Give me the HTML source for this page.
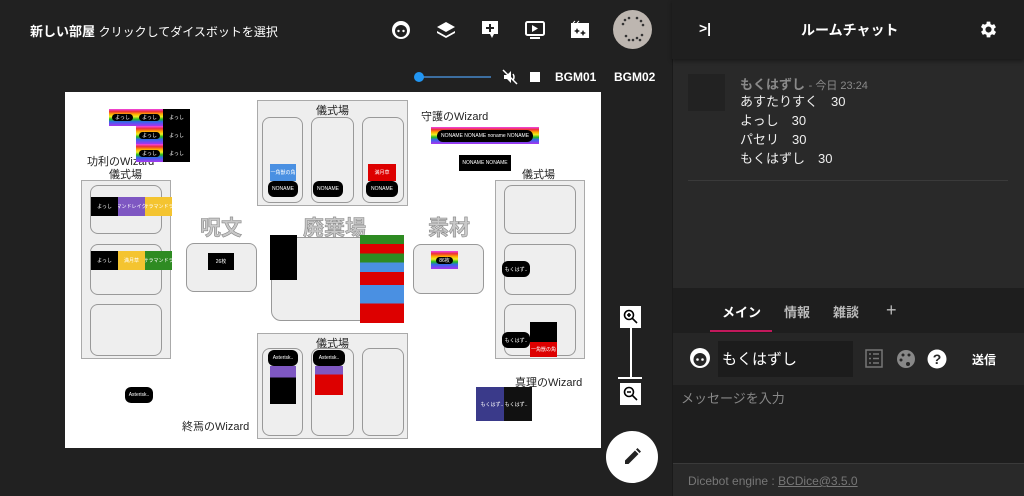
<!DOCTYPE html>
<html><head><meta charset="utf-8"><style>
*{margin:0;padding:0;box-sizing:border-box}
body{width:1024px;height:496px;overflow:hidden;background:#212121;font-family:"Liberation Sans","Noto Sans CJK JP",sans-serif;position:relative;color:#fff}
.a{position:absolute}
.box{position:absolute;background:#eee;border:1px solid #aaa}
.slot{position:absolute;background:#eee;border:1px solid #999;border-radius:8px}
.lbl{position:absolute;color:#222;font-size:11px;white-space:nowrap}
.big{position:absolute;font-size:21px;font-weight:bold;white-space:nowrap;-webkit-text-stroke:0.6px #888;color:#c8c8c8}
.c{position:absolute;font-size:5px;color:#fff;display:flex;align-items:center;justify-content:center;overflow:hidden;white-space:nowrap}
.k{background:#000}
.rb{background:linear-gradient(#e4e 0,#e33 15%,#fa0 30%,#ee2 45%,#2b2 60%,#36e 75%,#a3e 100%)}
.pill{background:#000;border-radius:6px;padding:0 3px}
</style></head><body>
<!-- top bar -->
<div class="a" style="left:30px;top:21px;font-size:13px;font-weight:bold">新しい部屋 <span style="font-weight:normal;font-size:12px">クリックしてダイスボットを選択</span></div>
<svg class="a" style="left:390px;top:18px" width="280" height="24" viewBox="0 0 280 24" fill="#fff">
<circle cx="11" cy="12" r="9"/><circle cx="11" cy="13" r="6" fill="#212121"/><circle cx="8.5" cy="13" r="1.2"/><circle cx="13.5" cy="13" r="1.2"/>
<path d="M56 4l9 5-9 5-9-5z M47 13l9 5 9-5v2l-9 5-9-5z"/>
<path d="M92 3h16v13h-4l-2 4-2-4H92z"/><path d="M99 6h2v3h3v2h-3v3h-2v-3h-3v-2h3z" fill="#212121"/>
<rect x="136" y="4" width="18" height="13" rx="1.5" fill="none" stroke="#fff" stroke-width="2"/><path d="M142 7l6 3.5-6 3.5z"/><rect x="140" y="19" width="10" height="2"/>
<path d="M181 5h18v15h-18z"/><path d="M183 5l2-2 M187 5l2-2" stroke="#fff"/><path d="M187 10l1 2 2 1-2 1-1 2-1-2-2-1 2-1z M193 12l1 2 2 1-2 1-1 2-1-2-2-1 2-1z" fill="#212121"/>
</svg>
<div class="a" style="left:613px;top:10px;width:39px;height:39px;border-radius:50%;background:#bdb6b0"></div>
<svg class="a" style="left:613px;top:10px" width="39" height="39" fill="#333"><circle cx="12" cy="10" r="1.3"/><circle cx="16" cy="8" r="1.3"/><circle cx="24" cy="8" r="1.3"/><circle cx="28" cy="11" r="1.3"/><circle cx="10" cy="14" r="1.3"/><circle cx="30" cy="15" r="1.3"/><circle cx="13" cy="26" r="1.3"/><circle cx="16" cy="30" r="1.3"/><circle cx="20" cy="30" r="1.3"/><circle cx="24" cy="28" r="1.3"/><circle cx="27" cy="30" r="1.3"/><circle cx="29" cy="25" r="1.3"/></svg>
<div class="a" style="left:419px;top:76px;width:72px;height:2px;background:#3c6ea0"></div>
<div class="a" style="left:414px;top:72px;width:10px;height:10px;border-radius:50%;background:#2196f3"></div>
<svg class="a" style="left:502px;top:69px" width="16" height="16" fill="#fff"><path d="M2 6h3l4-4v12l-4-4H2z"/><path d="M1 1l14 14" stroke="#fff" stroke-width="1.5"/><path d="M11 5q2 3 0 6" stroke="#fff" fill="none" stroke-width="1.5"/></svg>
<div class="a" style="left:530px;top:72px;width:10px;height:10px;background:#fff"></div>
<div class="a" style="left:555px;top:70px;font-size:12px;font-weight:bold">BGM01</div>
<div class="a" style="left:614px;top:70px;font-size:12px;font-weight:bold">BGM02</div>

<!-- board -->
<div class="a" style="left:65px;top:92px;width:536px;height:356px;background:#fff"></div>
<div class="box" style="left:257px;top:100px;width:151px;height:106px"></div>
<div class="lbl" style="left:316px;top:102px">儀式場</div>
<div class="slot" style="left:262px;top:117px;width:41px;height:86px"></div>
<div class="slot" style="left:311px;top:117px;width:43px;height:86px"></div>
<div class="slot" style="left:362px;top:117px;width:42px;height:86px"></div>
<div class="c" style="left:270px;top:164px;width:26px;height:17px;background:#4a90e2">一角獣の角</div>
<div class="c pill" style="left:268px;top:181px;width:30px;height:16px">NONAME</div>
<div class="c pill" style="left:313px;top:181px;width:30px;height:16px">NONAME</div>
<div class="c" style="left:368px;top:164px;width:28px;height:17px;background:#d00">満月草</div>
<div class="c pill" style="left:366px;top:181px;width:32px;height:16px">NONAME</div>

<div class="box" style="left:81px;top:180px;width:90px;height:179px"></div>
<div class="lbl" style="left:87px;top:153px">功利のWizard</div>
<div class="lbl" style="left:109px;top:166px">儀式場</div>
<div class="slot" style="left:90px;top:185px;width:72px;height:49px"></div>
<div class="slot" style="left:90px;top:244px;width:72px;height:51px"></div>
<div class="slot" style="left:90px;top:304px;width:72px;height:52px"></div>
<div class="c k" style="left:91px;top:197px;width:27px;height:19px">よっし</div>
<div class="c" style="left:118px;top:197px;width:27px;height:19px;background:#7e57c2">マンドレイク</div>
<div class="c" style="left:145px;top:197px;width:27px;height:19px;background:#f4c430">サラマンドラ</div>
<div class="c k" style="left:91px;top:251px;width:27px;height:19px">よっし</div>
<div class="c" style="left:118px;top:251px;width:27px;height:19px;background:#f4c430">満月草</div>
<div class="c" style="left:145px;top:251px;width:27px;height:19px;background:#2e8b22">サラマンドラ</div>

<div class="c rb" style="left:109px;top:109px;width:27px;height:17px"><span class="pill">よっし</span></div>
<div class="c rb" style="left:136px;top:109px;width:27px;height:17px"><span class="pill">よっし</span></div>
<div class="c k" style="left:163px;top:109px;width:27px;height:17px">よっし</div>
<div class="c rb" style="left:136px;top:126px;width:27px;height:18px"><span class="pill">よっし</span></div>
<div class="c k" style="left:163px;top:126px;width:27px;height:18px">よっし</div>
<div class="c rb" style="left:136px;top:144px;width:27px;height:18px"><span class="pill">よっし</span></div>
<div class="c k" style="left:163px;top:144px;width:27px;height:18px">よっし</div>

<div class="lbl" style="left:421px;top:108px">守護のWizard</div>
<div class="c rb" style="left:431px;top:127px;width:108px;height:17px"><span class="pill" style="padding:3px 4px;border-radius:8px">NONAME NONAME noname NONAME</span></div>
<div class="c k" style="left:459px;top:155px;width:52px;height:16px">NONAME NONAME</div>

<div class="box" style="left:495px;top:180px;width:90px;height:179px"></div>
<div class="lbl" style="left:522px;top:166px">儀式場</div>
<div class="slot" style="left:504px;top:185px;width:72px;height:49px"></div>
<div class="slot" style="left:504px;top:244px;width:72px;height:51px"></div>
<div class="slot" style="left:504px;top:304px;width:72px;height:52px"></div>
<div class="c pill" style="left:502px;top:261px;width:28px;height:16px">もくはず..</div>
<div class="c k" style="left:530px;top:322px;width:27px;height:20px"></div>
<div class="c pill" style="left:502px;top:332px;width:28px;height:16px">もくはず..</div>
<div class="c" style="left:530px;top:342px;width:27px;height:15px;background:#d00">一角獣の角</div>

<div class="big" style="left:200px;top:212px">呪文</div>
<div class="big" style="left:303px;top:212px">廃棄場</div>
<div class="big" style="left:428px;top:212px">素材</div>
<div class="slot" style="left:186px;top:243px;width:71px;height:49px"></div>
<div class="c k" style="left:208px;top:253px;width:26px;height:17px">26枚</div>
<div class="slot" style="left:271px;top:237px;width:133px;height:84px;border-radius:10px"></div>
<div class="c k" style="left:270px;top:235px;width:27px;height:45px"></div>
<div class="a" style="left:360px;top:235px;width:44px;height:88px;background:linear-gradient(#2e8b22 0 10%,#d00 10% 21%,#2e8b22 21% 31%,#4a90e2 31% 42%,#d00 42% 57%,#4a90e2 57% 78%,#d00 78% 100%)"></div>
<div class="slot" style="left:413px;top:244px;width:71px;height:50px"></div>
<div class="c rb" style="left:431px;top:251px;width:27px;height:18px"><span class="pill">86枚</span></div>

<div class="box" style="left:257px;top:333px;width:151px;height:106px"></div>
<div class="lbl" style="left:316px;top:335px">儀式場</div>
<div class="slot" style="left:262px;top:348px;width:41px;height:88px"></div>
<div class="slot" style="left:311px;top:348px;width:43px;height:88px"></div>
<div class="slot" style="left:362px;top:348px;width:42px;height:88px"></div>
<div class="c pill" style="left:268px;top:350px;width:30px;height:16px">Asterisk..</div>
<div class="c" style="left:270px;top:366px;width:26px;height:38px;background:linear-gradient(#7e57c2 0 30%,#000 30%)"></div>
<div class="c pill" style="left:313px;top:350px;width:32px;height:16px">Asterisk..</div>
<div class="c" style="left:315px;top:366px;width:28px;height:29px;background:linear-gradient(#7e57c2 0 30%,#d00 30%)"></div>
<div class="c pill" style="left:125px;top:387px;width:28px;height:16px">Asterisk..</div>
<div class="lbl" style="left:182px;top:418px">終焉のWizard</div>
<div class="lbl" style="left:515px;top:374px">真理のWizard</div>
<div class="c" style="left:476px;top:387px;width:56px;height:34px;background:linear-gradient(90deg,#3a3a8a 50%,#111 50%);font-size:5px">もくはず.. もくはず..</div>

<!-- zoom controls -->
<div class="a" style="left:620px;top:306px;width:21px;height:22px;background:#fff"></div>
<div class="a" style="left:630px;top:328px;width:2px;height:50px;background:#fff"></div>
<div class="a" style="left:618px;top:377px;width:24px;height:2px;background:#fff"></div>
<div class="a" style="left:620px;top:383px;width:21px;height:22px;background:#fff"></div>
<svg class="a" style="left:620px;top:306px" width="21" height="100"><g fill="none" stroke="#000" stroke-width="1.6"><circle cx="9" cy="9" r="4.5"/><path d="M12 12l5 5M7 9h4M9 7v4"/><circle cx="9" cy="86" r="4.5"/><path d="M12 89l5 5M7 86h4"/></g></svg>
<div class="a" style="left:606px;top:431px;width:52px;height:52px;border-radius:50%;background:#fff"></div>
<svg class="a" style="left:622px;top:447px" width="20" height="20"><path d="M3 17v-3.5L13 3.5 16.5 7 6.5 17zM14 2.5l1.5-1.5 3.5 3.5-1.5 1.5z" fill="#222"/></svg>

<!-- right panel -->
<div class="a" style="left:672px;top:0;width:352px;height:496px;background:#292929;border-left:1px solid #1a1a1a"></div>
<div class="a" style="left:672px;top:0;width:352px;height:59px;background:#1f1f1f;box-shadow:0 2px 4px rgba(0,0,0,.4)"></div>
<div class="a" style="left:699px;top:20px;font-size:14px;font-weight:bold">&gt;|</div>
<div class="a" style="left:801px;top:20px;font-size:14px;font-weight:bold">ルームチャット</div>
<svg class="a" style="left:978px;top:19px" width="21" height="21" viewBox="0 0 24 24" fill="#fff"><path d="M19.4 13a7.5 7.5 0 000-2l2.1-1.6-2-3.5-2.5 1a7 7 0 00-1.7-1L15 3h-4l-.4 2.6a7 7 0 00-1.7 1l-2.5-1-2 3.5L6.6 11a7.5 7.5 0 000 2l-2.1 1.6 2 3.5 2.5-1a7 7 0 001.7 1L11 21h4l.4-2.6a7 7 0 001.7-1l2.5 1 2-3.5zM13 15.5A3.5 3.5 0 1113 8.5a3.5 3.5 0 010 7z" transform="translate(-1 0)"/></svg>
<div class="a" style="left:688px;top:74px;width:37px;height:37px;background:#222"></div>
<div class="a" style="left:740px;top:74px;font-size:13px;color:#8a8a8a;font-weight:bold">もくはずし <span style="font-size:11px;font-weight:normal">- 今日 23:24</span></div>
<div class="a" style="left:740px;top:92px;font-size:13px;line-height:19px;color:#eee">あすたりすく　30<br>よっし　30<br>パセリ　30<br>もくはずし　30</div>
<div class="a" style="left:688px;top:180px;width:320px;height:1px;background:#3a3a3a"></div>
<div class="a" style="left:673px;top:288px;width:351px;height:45px;background:#1e1e1e"></div>
<div class="a" style="left:722px;top:302px;font-size:13px;font-weight:bold">メイン</div>
<div class="a" style="left:784px;top:302px;font-size:13px;font-weight:bold;color:#bbb">情報</div>
<div class="a" style="left:833px;top:302px;font-size:13px;font-weight:bold;color:#bbb">雑談</div>
<div class="a" style="left:886px;top:300px;font-size:18px;color:#bbb">+</div>
<div class="a" style="left:710px;top:330px;width:62px;height:2px;background:#c2185b"></div>
<div class="a" style="left:673px;top:333px;width:351px;height:52px;background:#262626"></div>
<svg class="a" style="left:689px;top:347px" width="22" height="22" viewBox="0 0 22 22" fill="#fff"><circle cx="11" cy="11" r="10"/><circle cx="11" cy="12.5" r="6.5" fill="#262626"/><circle cx="8.5" cy="12.5" r="1.3"/><circle cx="13.5" cy="12.5" r="1.3"/></svg>
<div class="a" style="left:718px;top:341px;width:135px;height:36px;background:#1c1c1c"></div>
<div class="a" style="left:722px;top:348px;font-size:15px">もくはずし</div>
<svg class="a" style="left:864px;top:348px" width="90" height="22"><rect x="2" y="2" width="16" height="17" fill="none" stroke="#777" stroke-width="1.5"/><path d="M5 6h2M9 6h6M5 10.5h2M9 10.5h6M5 15h2M9 15h6" stroke="#777" stroke-width="1.5"/><circle cx="42" cy="11" r="9" fill="#888"/><circle cx="39" cy="7" r="1.5" fill="#262626"/><circle cx="45" cy="7" r="1.5" fill="#262626"/><circle cx="37" cy="12" r="1.5" fill="#262626"/><circle cx="44" cy="16" r="2" fill="#262626"/><circle cx="73" cy="11" r="9.5" fill="#fff"/><text x="73" y="16" text-anchor="middle" font-size="14" font-weight="bold" fill="#262626" font-family="Liberation Sans">?</text></svg>
<div class="a" style="left:972px;top:351px;font-size:12px;font-weight:bold">送信</div>
<div class="a" style="left:673px;top:385px;width:351px;height:78px;background:#1e1e1e"></div>
<div class="a" style="left:681px;top:388px;font-size:13px;color:#888">メッセージを入力</div>
<div class="a" style="left:673px;top:463px;width:351px;height:1px;background:#3a3a3a"></div>
<div class="a" style="left:688px;top:474px;font-size:12px;color:#777">Dicebot engine : <span style="text-decoration:underline">BCDice@3.5.0</span></div>
</body></html>
